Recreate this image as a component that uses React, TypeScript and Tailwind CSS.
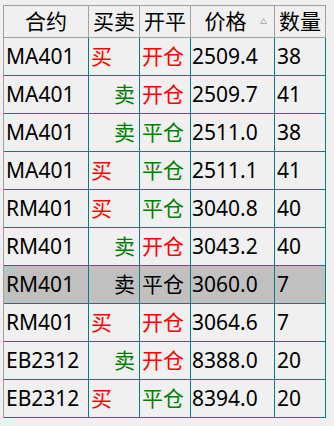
const rows = [
  { code: "MA401", side: "买", open: "开仓", price: "2509.4", qty: "38" },
  { code: "MA401", side: "卖", open: "开仓", price: "2509.7", qty: "41" },
  { code: "MA401", side: "卖", open: "平仓", price: "2511.0", qty: "38" },
  { code: "MA401", side: "买", open: "平仓", price: "2511.1", qty: "41" },
  { code: "RM401", side: "买", open: "平仓", price: "3040.8", qty: "40" },
  { code: "RM401", side: "卖", open: "开仓", price: "3043.2", qty: "40" },
  { code: "RM401", side: "卖", open: "平仓", price: "3060.0", qty: "7", selected: true },
  { code: "RM401", side: "买", open: "开仓", price: "3064.6", qty: "7" },
  { code: "EB2312", side: "卖", open: "开仓", price: "8388.0", qty: "20" },
  { code: "EB2312", side: "买", open: "平仓", price: "8394.0", qty: "20" },
];

const font = { fontFamily: '"Noto Sans", "Noto Sans CJK SC", sans-serif' };

export default function App() {
  return (
    <div className="h-[426px] w-[334px] bg-[#f0f0f0] pl-[3px] pt-[5px] text-[21px] text-black" style={font}>
      <div className="w-[323px] border-l border-[#a0a0a0]">
        <div className="flex h-[33px] border-y border-[#a0a0a0]">
          <div className="flex w-[85px] items-center justify-center border-r border-[#a0a0a0]">合约</div>
          <div className="flex w-[51px] items-center justify-center border-r border-[#a0a0a0]">买卖</div>
          <div className="flex w-[51px] items-center justify-center border-r border-[#a0a0a0]">开平</div>
          <div className="flex w-[84px] items-center border-r border-[#a0a0a0]">
            <span className="flex-1 text-center">价格</span>
            <svg width="7" height="6" viewBox="0 0 7 6" className="mr-[7px] mb-[2px]">
              <path d="M3.5 0.5 L6.5 5.5 L0.5 5.5 Z" fill="#f4f4f4" stroke="#b0b0b0" strokeWidth="1" />
            </svg>
          </div>
          <div className="flex w-[51px] items-center justify-center border-r border-[#a0a0a0]">数量</div>
        </div>
        {rows.map((r, i) => {
          const sel = r.selected;
          const sideColor = sel ? "text-black" : r.side === "买" ? "text-[#ff0000]" : "text-[#008000]";
          const openColor = sel ? "text-black" : r.open === "开仓" ? "text-[#ff0000]" : "text-[#008000]";
          return (
            <div key={i} className={`flex h-[38px] border-b border-[#008080] ${sel ? "bg-[#c0c0c0]" : ""}`}>
              <div className="flex w-[85px] items-center border-r border-[#008080] pl-[2px]">{r.code}</div>
              <div
                className={`flex w-[51px] items-center border-r border-[#008080] ${
                  r.side === "买" ? "justify-start pl-[2px]" : "justify-end pr-[4px]"
                } ${sideColor}`}
              >
                {r.side}
              </div>
              <div className={`flex w-[51px] items-center border-r border-[#008080] pl-[2px] ${openColor}`}>{r.open}</div>
              <div className="flex w-[84px] items-center border-r border-[#008080] pl-[1px]">{r.price}</div>
              <div className="flex w-[51px] items-center border-r border-[#008080] pl-[2px]">{r.qty}</div>
            </div>
          );
        })}
      </div>
    </div>
  );
}
